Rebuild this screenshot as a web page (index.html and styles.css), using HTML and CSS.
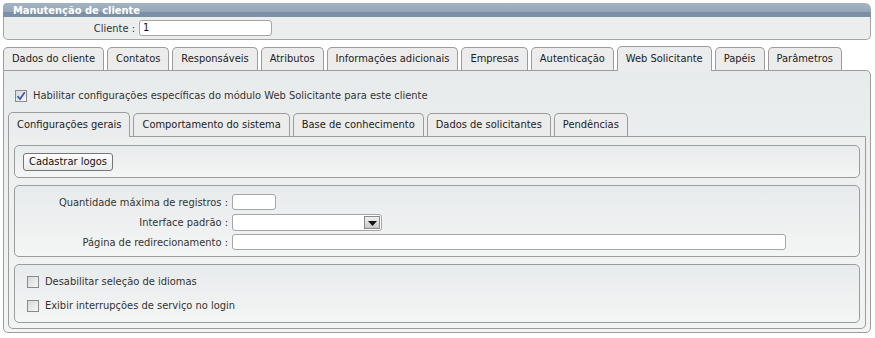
FILE: index.html
```html
<!DOCTYPE html>
<html lang="pt">
<head>
    <meta charset="UTF-8">
    <title>Manutenção de cliente</title>
    <link rel="stylesheet" href="styles.css">
</head>
<body>
    <div class="header">Manutenção de cliente</div>
    <div class="client-bar">
        <label class="client-label">Cliente :</label>
        <div class="field client-field">1</div>
    </div>

    <div class="tabs">
        <div class="tab">Dados do cliente</div>
        <div class="tab">Contatos</div>
        <div class="tab">Responsáveis</div>
        <div class="tab">Atributos</div>
        <div class="tab">Informações adicionais</div>
        <div class="tab">Empresas</div>
        <div class="tab">Autenticação</div>
        <div class="tab active">Web Solicitante</div>
        <div class="tab">Papéis</div>
        <div class="tab">Parâmetros</div>
    </div>
    <div class="panel">
        <div class="check-row top-check">
            <span class="check">
                <svg width="10" height="10" viewBox="0 0 10 10"><path d="M1.5 5.2 L4 8 L8.8 1.2" fill="none" stroke="#3b5fa8" stroke-width="1.8"/></svg>
            </span>
            <span>Habilitar configurações específicas do módulo Web Solicitante para este cliente</span>
        </div>

        <div class="tabs sub-tabs">
            <div class="tab active">Configurações gerais</div>
            <div class="tab">Comportamento do sistema</div>
            <div class="tab">Base de conhecimento</div>
            <div class="tab">Dados de solicitantes</div>
            <div class="tab">Pendências</div>
        </div>
        <div class="sub-panel">
            <div class="box logos">
                <button class="btn">Cadastrar logos</button>
            </div>
            <div class="box form">
                <div class="form-row">
                    <label>Quantidade máxima de registros :</label>
                    <div class="field short"></div>
                </div>
                <div class="form-row">
                    <label>Interface padrão :</label>
                    <div class="select">
                        <span class="select-btn">
                            <svg width="9" height="5" viewBox="0 0 9 5"><path d="M0 0 H9 L4.5 5 Z" fill="#111"/></svg>
                        </span>
                    </div>
                </div>
                <div class="form-row">
                    <label>Página de redirecionamento :</label>
                    <div class="field long"></div>
                </div>
            </div>
            <div class="box options">
                <div class="check-row"><span class="check"></span><span>Desabilitar seleção de idiomas</span></div>
                <div class="check-row"><span class="check"></span><span>Exibir interrupções de serviço no login</span></div>
            </div>
        </div>
    </div>
</body>
</html>
```

FILE: styles.css
```css
body {
    margin: 0;
    padding: 3px 4px 3px 3px;
    font-family: "DejaVu Sans Condensed", "DejaVu Sans", sans-serif;
    font-size: 11px;
    color: #333;
    background: #fff;
}

.header {
    height: 14px;
    line-height: 15px;
    padding-left: 10px;
    color: #fff;
    font-weight: bold;
    border-radius: 4px 6px 0 0;
    background: linear-gradient(#a3b3c3, #95a7b9 62%, #7b8fa5 62%, #7b8fa5);
}

.client-bar {
    display: flex;
    align-items: center;
    height: 22px;
    border: 1px solid #a3a3a3;
    border-top: none;
    border-radius: 0 0 5px 5px;
    background: #eceeee;
}

.client-label {
    width: 131px;
    text-align: right;
    padding-right: 4px;
}

.field {
    box-sizing: border-box;
    height: 16px;
    line-height: 14px;
    padding-left: 3px;
    color: #111;
    background: #fff;
    border: 1px solid #a5a5a5;
    border-radius: 3px;
}

.client-field {
    width: 133px;
}

.tabs {
    display: flex;
    align-items: flex-end;
    gap: 3px;
    margin-top: 6px;
    height: 24px;
}

.tab {
    box-sizing: border-box;
    height: 23px;
    line-height: 22px;
    padding: 0 8px;
    color: #222;
    background: #ececec;
    border: 1px solid #9c9c9c;
    border-bottom: none;
    border-radius: 5px 5px 0 0;
}

.tab.active {
    height: 25px;
    line-height: 24px;
    margin-bottom: -1px;
    position: relative;
    background: #eaeced;
}

.panel {
    border: 1px solid #9c9c9c;
    border-radius: 0 5px 5px 5px;
    padding: 0 4px 3px 4px;
    background: linear-gradient(#e8ebec, #f3f4f4);
}

.check-row {
    display: flex;
    align-items: center;
    gap: 6px;
}

.top-check {
    margin: 18px 0 0 7px;
    height: 13px;
}

.check {
    box-sizing: border-box;
    width: 12px;
    height: 12px;
    display: flex;
    align-items: center;
    justify-content: center;
    border: 1px solid #8a8a8a;
    background: linear-gradient(135deg, #d8d8d8, #f6f6f6);
}

.sub-tabs {
    margin-top: 10px;
}

.sub-panel {
    border: 1px solid #9c9c9c;
    border-radius: 0 0 5px 5px;
    padding: 8px 5px 5px 5px;
    display: flex;
    flex-direction: column;
    gap: 7px;
    background: linear-gradient(#edefef, #f2f3f3);
}

.box {
    border: 1px solid #9c9c9c;
    border-radius: 5px;
    background: linear-gradient(#e8ebec, #f4f5f5);
}

.logos {
    height: 31px;
    display: flex;
    align-items: center;
    padding-left: 8px;
}

.btn {
    height: 18px;
    padding: 0 5px;
    font: inherit;
    color: #111;
    border: 1px solid #777;
    border-radius: 3px;
    background: linear-gradient(#ffffff, #e9e9e9);
}

.form {
    padding: 8px 0 6px 0;
    display: flex;
    flex-direction: column;
    gap: 4px;
}

.form-row {
    display: flex;
    align-items: center;
    height: 16px;
}

.form-row label {
    width: 213px;
    padding-right: 4px;
    text-align: right;
}

.short {
    width: 44px;
}

.long {
    width: 554px;
}

.select {
    box-sizing: border-box;
    width: 150px;
    height: 17px;
    display: flex;
    justify-content: flex-end;
    align-items: center;
    background: #fff;
    border: 1px solid #a5a5a5;
    border-radius: 3px;
    padding-right: 1px;
}

.select-btn {
    box-sizing: border-box;
    width: 16px;
    height: 13px;
    display: flex;
    align-items: center;
    justify-content: center;
    padding-top: 3px;
    background: linear-gradient(#f0f0f0, #c8c8c8);
    border: 1px solid #8a8a8a;
}

.options {
    height: 57px;
    padding-left: 12px;
    display: flex;
    flex-direction: column;
    justify-content: center;
    gap: 11px;
}
```
